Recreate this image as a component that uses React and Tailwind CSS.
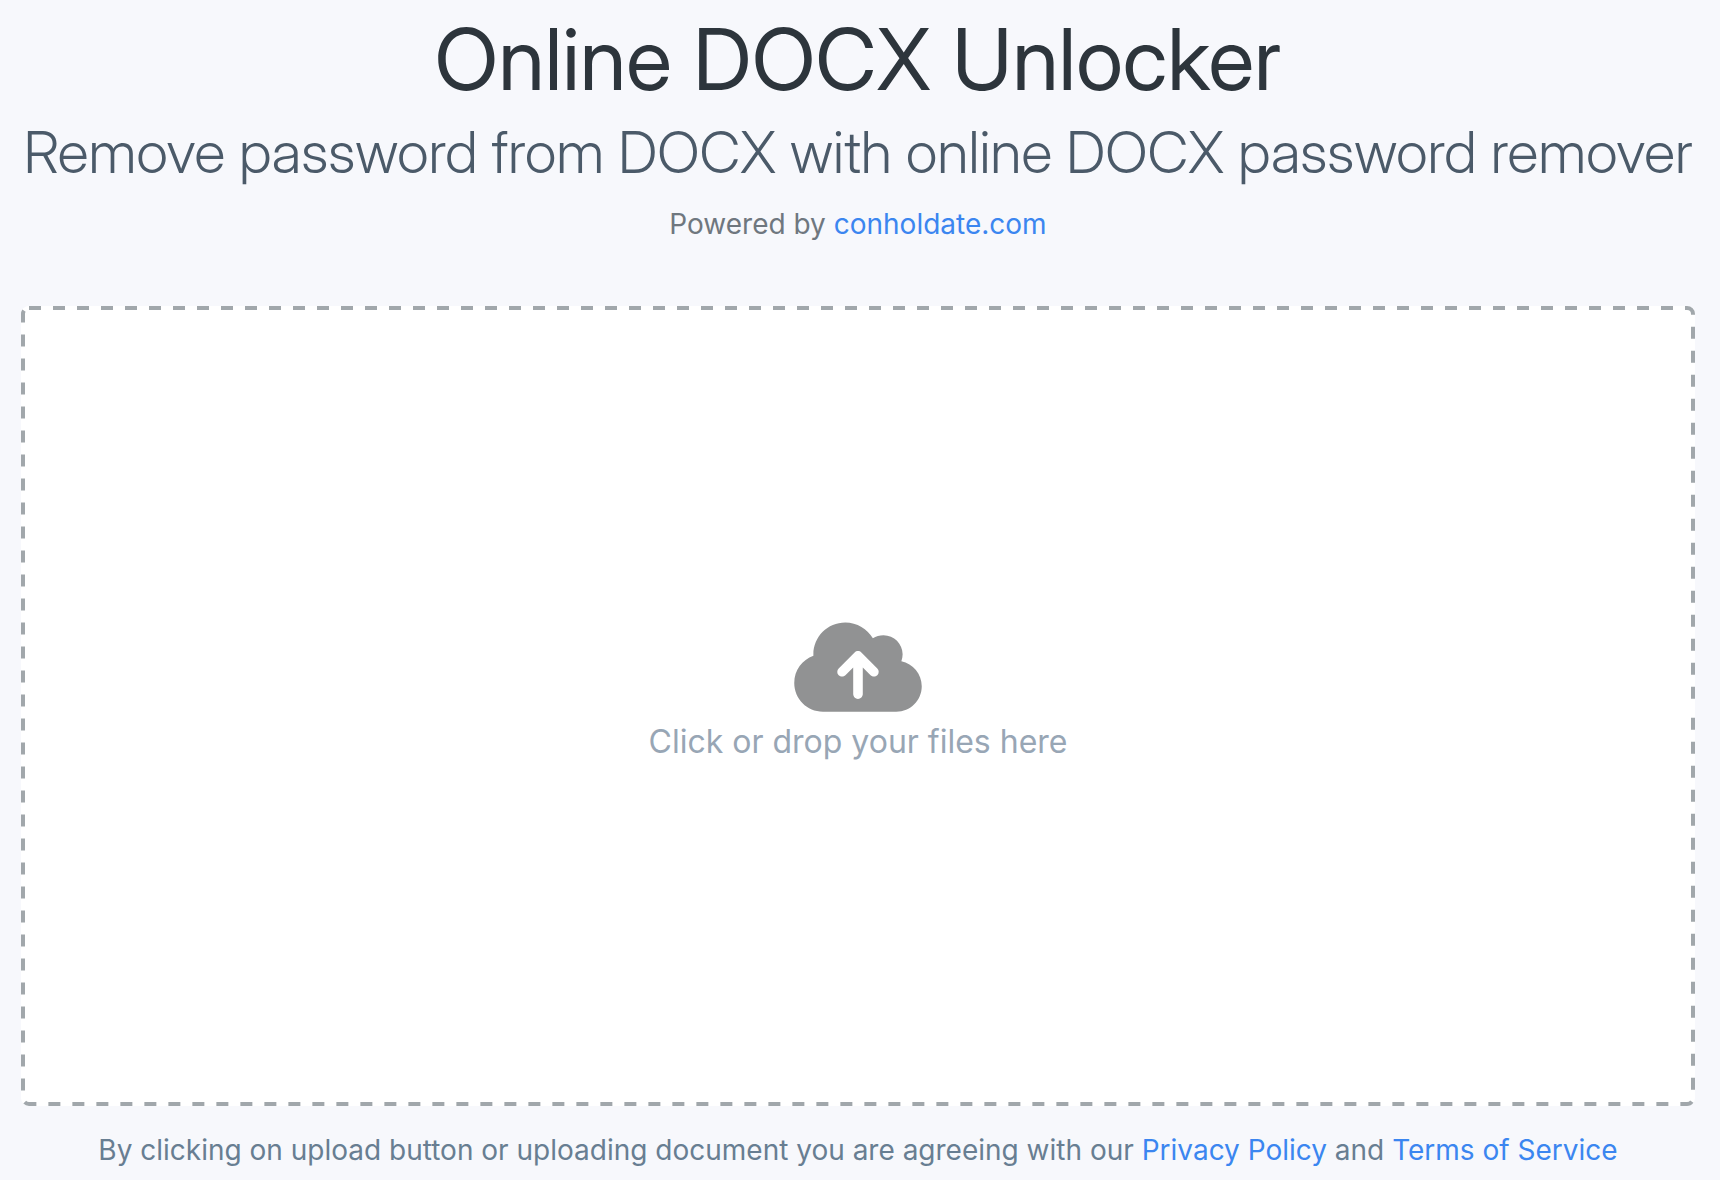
import React from 'react';
import { FaCloudArrowUp } from 'react-icons/fa6';

function DashedFrame() {
  // the dash pattern restarts halfway down the right edge
  return (
    <>
      <svg
        aria-hidden="true"
        className="absolute inset-0 h-full w-full [clip-path:inset(0_0_50%_8px)]"
      >
        <rect
          x="2"
          y="2"
          rx="6"
          className="h-[calc(100%-4px)] w-[calc(100%-4px)] fill-none stroke-[#a1a7ab] stroke-4 [stroke-dasharray:12_12]"
        />
      </svg>
      <svg
        aria-hidden="true"
        className="absolute inset-0 h-full w-full [clip-path:polygon(0_0,8px_0,8px_50%,100%_50%,100%_100%,0_100%)]"
      >
        <rect
          x="2"
          y="2"
          rx="6"
          className="h-[calc(100%-4px)] w-[calc(100%-4px)] fill-none stroke-[#a1a7ab] stroke-4 [stroke-dasharray:12_12] [stroke-dashoffset:-7px]"
        />
      </svg>
    </>
  );
}

function DropZone(props) {
  const { files, setFiles } = props;

  return (
    <label className="relative flex h-[800px] cursor-pointer flex-col items-center justify-center rounded-lg bg-white pb-[30px]">
      <DashedFrame />
      <input
        type="file"
        accept=".docx"
        multiple
        className="sr-only"
        onChange={(e) => setFiles(Array.from(e.target.files))}
      />
      <FaCloudArrowUp className="h-[102px] w-32 text-[#919293]" />
      <span className="text-[32px] leading-[48px] text-[#98a6b5]">
        {files.length ? files.map((file) => file.name).join(', ') : 'Click or drop your files here'}
      </span>
    </label>
  );
}

function App() {
  const [files, setFiles] = React.useState([]);

  return (
    <main className="min-h-screen bg-[#f7f8fc] pt-4 pr-[25px] pl-[21px] text-center font-[Inter,sans-serif]">
      <h1 className="font-['Inter_Display',Inter,sans-serif] text-[85px] leading-[88px] text-[#2d353c]">
        Online DOCX Unlocker
      </h1>
      <h2 className="font-['Inter_Display',Inter,sans-serif] text-[58px] leading-[96px] font-light text-[#4b5a69]">
        Remove password from DOCX with online DOCX password remover
      </h2>
      <p className="mb-[58px] text-[28px] leading-[48px] text-[#6f777f]">
        Powered by
        {' '}
        <a href="#conholdate" className="text-[#3b86f0]">conholdate.com</a>
      </p>
      <DropZone files={files} setFiles={setFiles} />
      <p className="pt-5 text-[28px] leading-[48px] text-[#687e92]">
        By clicking on upload button or uploading document you are agreeing with our
        {' '}
        <a href="#privacy" className="text-[#3b86f0]">Privacy Policy</a>
        {' '}
        and
        {' '}
        <a href="#terms" className="text-[#3b86f0]">Terms of Service</a>
      </p>
    </main>
  );
}

export default App;
